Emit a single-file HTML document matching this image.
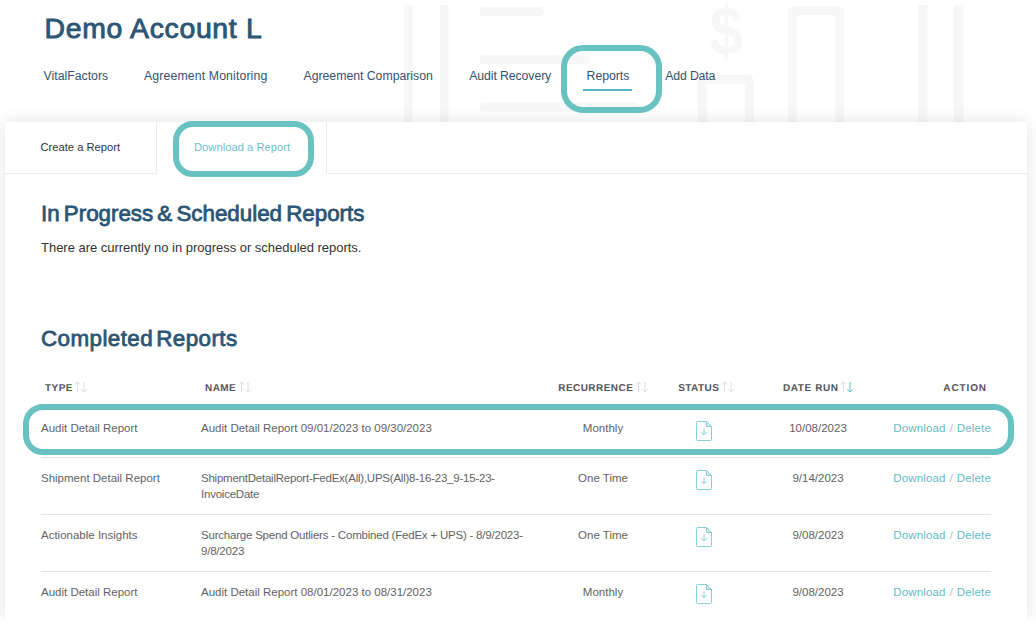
<!DOCTYPE html>
<html lang="en">
<head>
<meta charset="utf-8">
<title>Demo Account L - Reports</title>
<style>
  html, body { margin: 0; padding: 0; }
  body {
    width: 1036px; height: 630px; overflow: hidden; position: relative;
    background: #fff;
    font-family: "Liberation Sans", sans-serif;
    color: #333;
  }
  .abs { position: absolute; }
  /* faint header watermark */
  #wm { position: absolute; left: 0; top: 0; width: 1036px; height: 122px; }
  /* header */
  h1 {
    position: absolute; left: 44.6px; top: 11px; margin: 0;
    font-size: 28.4px; line-height: 34px; font-weight: normal;
    color: #2c5674; letter-spacing: 0.68px; -webkit-text-stroke: 0.9px #2c5674; white-space: nowrap;
  }
  nav a {
    position: absolute; top: 67.7px; height: 17px; line-height: 17px;
    font-size: 12.3px; color: #34536f; text-decoration: none; white-space: nowrap;
  }
  nav a.active::after {
    content: ""; position: absolute; left: -4px; right: -3px; top: 21.3px; height: 2px;
    background: #56b6c0;
  }
  .hl {
    position: absolute; box-sizing: border-box;
    border: 6px solid #68c2c2; pointer-events: none;
  }
  /* card */
  #card {
    position: absolute; left: 5px; top: 122px; width: 1022px; height: 498px;
    background: #fff; box-shadow: 0 0 16px rgba(0,0,0,0.11);
  }
  #clip { position: absolute; left: 0; top: 0; width: 1036px; height: 620px; overflow: hidden; }
  .tabs { position: absolute; left: 0; top: 0; width: 1022px; height: 52px; }
  .tab {
    position: absolute; top: 0; height: 51px; box-sizing: content-box;
    border-right: 1px solid #ececec; border-bottom: 1px solid #ececec;
    font-size: 11.2px; line-height: 51px; color: #333; white-space: nowrap;
  }
  .tab span { position: absolute; top: 0; }
  .tab.t1 { left: 0; width: 151px; }
  .tab.t2 { left: 152px; width: 169px; border-bottom-color: transparent; color: #6cc3c8; }
  .tab.t3 { left: 322px; width: 700px; border-right: none; }
  h2 {
    position: absolute; left: 36px; margin: 0; font-size: 22.4px; line-height: 28px;
    font-weight: normal; color: #2c5674; white-space: nowrap; -webkit-text-stroke: 0.8px #2c5674;
  }
  p.note {
    position: absolute; left: 36px; top: 117px; margin: 0;
    font-size: 13px; line-height: 18px; color: #333; white-space: nowrap; letter-spacing: -0.02px;
  }
  table {
    position: absolute; left: 36px; top: 250px; width: 950px;
    border-collapse: collapse; table-layout: fixed;
  }
  th {
    height: 36px; padding: 0 4px; box-sizing: border-box;
    font-size: 10px; font-weight: bold; letter-spacing: 0.45px; color: #555; text-rendering: geometricPrecision;
    text-align: left; white-space: nowrap; vertical-align: top; line-height: 34px;
  }
  th svg { vertical-align: -2px; margin-left: 1.5px; }
  th.c { padding-left: 5px; }
  tbody tr { height: 49px; }
  td {
    padding: 12px 0 12px 0; vertical-align: top;
    font-size: 11.5px; line-height: 16px; color: #626262;
    border-top: 1px solid #e4e4e4;
  }
  tr.first td { border-top-color: transparent; padding-top: 11px; }
  tr.first td.icon { padding-top: 12px; }
  .c { text-align: center; }
  .r { text-align: right; }
  td.icon { padding: 12px 0 0 0; line-height: 0; }
  td.icon svg { display: block; margin: 0 auto; }
  td a { color: #5fbdc5; text-decoration: none; letter-spacing: 0.15px; }
  td.r { word-spacing: 0.8px; }
  td .sl { color: #b9b9c8; }
</style>
</head>
<body>
<div id="clip">

<svg id="wm" viewBox="0 0 1036 122">
  <g fill="#f7f7f7">
    <rect x="404" y="5" width="8.5" height="120"/>
    <rect x="440" y="5" width="8.5" height="120"/>
    <rect x="479.5" y="7" width="64" height="9" rx="4.5"/>
    <rect x="479.5" y="55" width="111" height="9" rx="4.5"/>
    <rect x="479.5" y="102.5" width="160" height="9" rx="4.5"/>
    <rect x="918" y="5" width="9.5" height="120"/>
    <rect x="954" y="5" width="9.5" height="120"/>
  </g>
  <g fill="none" stroke="#f7f7f7" stroke-width="9">
    <rect x="702.5" y="79.5" width="47" height="60" rx="2"/>
    <rect x="792.5" y="10.5" width="47" height="130" rx="2"/>
  </g>
  <text x="0" y="0" transform="translate(726.3 54.5) scale(0.86 1)" font-family="Liberation Sans, sans-serif" font-weight="bold" font-size="69" text-anchor="middle" fill="#f7f7f7">$</text>
</svg>

<h1>Demo Account L</h1>
<nav>
  <a style="left:43.5px" href="#">VitalFactors</a>
  <a style="left:144px;letter-spacing:0.12px" href="#">Agreement Monitoring</a>
  <a style="left:303.5px;letter-spacing:-0.03px" href="#">Agreement Comparison</a>
  <a style="left:469.2px;letter-spacing:-0.1px" href="#">Audit Recovery</a>
  <a style="left:586.6px;letter-spacing:-0.05px" href="#" class="active">Reports</a>
  <a style="left:665.2px;letter-spacing:-0.15px" href="#">Add Data</a>
</nav>

<div id="card">
  <div class="tabs">
    <div class="tab t1"><span style="left:35.5px">Create a Report</span></div>
    <div class="tab t2"><span style="left:37px;letter-spacing:0.02px">Download a Report</span></div>
    <div class="tab t3"></div>
  </div>

  <h2 style="top:78px;letter-spacing:-0.03px;word-spacing:-2px">In Progress &amp; Scheduled Reports</h2>
  <p class="note">There are currently no in progress or scheduled reports.</p>
  <h2 style="top:203px;letter-spacing:0.42px;word-spacing:-3.5px">Completed Reports</h2>

  <table>
    <colgroup>
      <col style="width:160px"><col style="width:348px"><col style="width:108px">
      <col style="width:94px"><col style="width:134px"><col style="width:106px">
    </colgroup>
    <thead>
      <tr>
        <th>TYPE<svg width="14" height="12" viewBox="0 0 14 12"><g fill="none" stroke="#dedede" stroke-width="1"><path d="M3.5 1v10M0.8 3.7L3.5 1l2.7 2.7"/><path d="M10 1v10M7.3 8.3L10 11l2.7-2.7"/></g></svg></th>
        <th>NAME<svg width="14" height="12" viewBox="0 0 14 12"><g fill="none" stroke="#dedede" stroke-width="1"><path d="M3.5 1v10M0.8 3.7L3.5 1l2.7 2.7"/><path d="M10 1v10M7.3 8.3L10 11l2.7-2.7"/></g></svg></th>
        <th class="c">RECURRENCE<svg width="14" height="12" viewBox="0 0 14 12"><g fill="none" stroke="#dedede" stroke-width="1"><path d="M3.5 1v10M0.8 3.7L3.5 1l2.7 2.7"/><path d="M10 1v10M7.3 8.3L10 11l2.7-2.7"/></g></svg></th>
        <th class="c" style="padding-left:9px">STATUS<svg width="14" height="12" viewBox="0 0 14 12"><g fill="none" stroke="#dedede" stroke-width="1"><path d="M3.5 1v10M0.8 3.7L3.5 1l2.7 2.7"/><path d="M10 1v10M7.3 8.3L10 11l2.7-2.7"/></g></svg></th>
        <th class="c" style="letter-spacing:0.6px">DATE RUN<svg width="14" height="12" viewBox="0 0 14 12"><g fill="none" stroke-width="1"><path stroke="#dedede" d="M3.5 1v10M0.8 3.7L3.5 1l2.7 2.7"/><path stroke="#5fbdc6" d="M10 1v10M7.3 8.3L10 11l2.7-2.7"/></g></svg></th>
        <th class="r" style="letter-spacing:0.9px">ACTION</th>
      </tr>
    </thead>
    <tbody>
      <tr class="first">
        <td>Audit Detail Report</td>
        <td>Audit Detail Report 09/01/2023 to 09/30/2023</td>
        <td class="c">Monthly</td>
        <td class="icon"><svg width="16" height="20" viewBox="0 0 16 20"><path d="M10.5 0.5V5.5H15.5Z" fill="#d3eef0" stroke="none"/><path d="M1.5 0.5H10.5L15.5 5.5V18.5a1 1 0 0 1-1 1H1.5a1 1 0 0 1-1-1V1.5a1 1 0 0 1 1-1zM10.5 0.5V5.5H15.5M8 7.5V13.5M5.2 11L8 13.8L10.8 11" fill="none" stroke="#86d0d5" stroke-width="1"/></svg></td>
        <td class="c">10/08/2023</td>
        <td class="r"><a href="#">Download</a> <span class="sl">/</span> <a href="#">Delete</a></td>
      </tr>
      <tr>
        <td>Shipment Detail Report</td>
        <td style="letter-spacing:-0.23px">ShipmentDetailReport-FedEx(All),UPS(All)8-16-23_9-15-23-<br>InvoiceDate</td>
        <td class="c">One Time</td>
        <td class="icon"><svg width="16" height="20" viewBox="0 0 16 20"><path d="M10.5 0.5V5.5H15.5Z" fill="#d3eef0" stroke="none"/><path d="M1.5 0.5H10.5L15.5 5.5V18.5a1 1 0 0 1-1 1H1.5a1 1 0 0 1-1-1V1.5a1 1 0 0 1 1-1zM10.5 0.5V5.5H15.5M8 7.5V13.5M5.2 11L8 13.8L10.8 11" fill="none" stroke="#86d0d5" stroke-width="1"/></svg></td>
        <td class="c">9/14/2023</td>
        <td class="r"><a href="#">Download</a> <span class="sl">/</span> <a href="#">Delete</a></td>
      </tr>
      <tr>
        <td>Actionable Insights</td>
        <td style="letter-spacing:-0.21px">Surcharge Spend Outliers - Combined (FedEx + UPS) - 8/9/2023-<br>9/8/2023</td>
        <td class="c">One Time</td>
        <td class="icon"><svg width="16" height="20" viewBox="0 0 16 20"><path d="M10.5 0.5V5.5H15.5Z" fill="#d3eef0" stroke="none"/><path d="M1.5 0.5H10.5L15.5 5.5V18.5a1 1 0 0 1-1 1H1.5a1 1 0 0 1-1-1V1.5a1 1 0 0 1 1-1zM10.5 0.5V5.5H15.5M8 7.5V13.5M5.2 11L8 13.8L10.8 11" fill="none" stroke="#86d0d5" stroke-width="1"/></svg></td>
        <td class="c">9/08/2023</td>
        <td class="r"><a href="#">Download</a> <span class="sl">/</span> <a href="#">Delete</a></td>
      </tr>
      <tr>
        <td>Audit Detail Report</td>
        <td>Audit Detail Report 08/01/2023 to 08/31/2023</td>
        <td class="c">Monthly</td>
        <td class="icon"><svg width="16" height="20" viewBox="0 0 16 20"><path d="M10.5 0.5V5.5H15.5Z" fill="#d3eef0" stroke="none"/><path d="M1.5 0.5H10.5L15.5 5.5V18.5a1 1 0 0 1-1 1H1.5a1 1 0 0 1-1-1V1.5a1 1 0 0 1 1-1zM10.5 0.5V5.5H15.5M8 7.5V13.5M5.2 11L8 13.8L10.8 11" fill="none" stroke="#86d0d5" stroke-width="1"/></svg></td>
        <td class="c">9/08/2023</td>
        <td class="r"><a href="#">Download</a> <span class="sl">/</span> <a href="#">Delete</a></td>
      </tr>
    </tbody>
  </table>
</div>

<!-- tutorial highlight rings -->
<div class="hl" style="left:561px;top:44.5px;width:101px;height:68.5px;border-radius:22px"></div>
<div class="hl" style="left:173px;top:121px;width:141px;height:56px;border-radius:20px"></div>
<div class="hl" style="left:23px;top:404px;width:991px;height:51px;border-radius:20px"></div>

</div>
</body>
</html>
